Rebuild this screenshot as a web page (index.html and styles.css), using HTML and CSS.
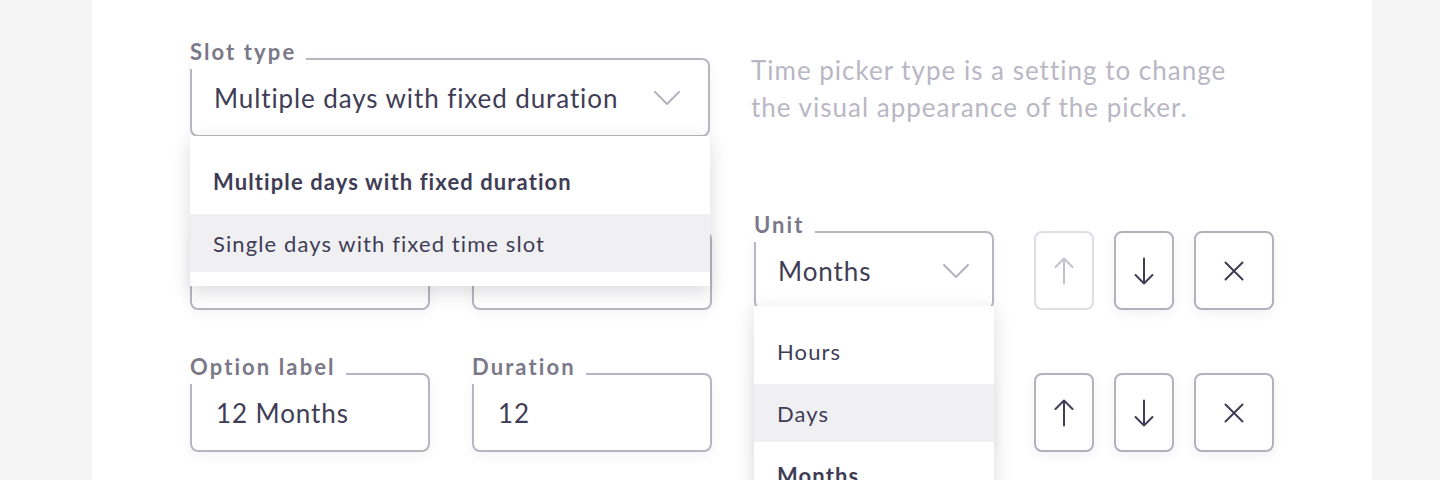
FILE: index.html
```html
<!DOCTYPE html>
<html lang="en">
<head>
    <meta charset="UTF-8">
    <meta name="viewport" content="width=device-width, initial-scale=1.0">
    <title>Time slots</title>
    <link rel="stylesheet" href="styles.css">
</head>
<body>
<div class="card">
    <div class="row-top">
        <div class="field wide">
            <span class="field-label">Slot type</span>
            <span class="field-value">Multiple days with fixed duration</span>
            <svg class="chevron" width="26" height="14" viewBox="0 0 26 14"><path d="M1 1l12 12L25 1"/></svg>
            <ul class="menu">
                <li class="selected">Multiple days with fixed duration</li>
                <li class="hover">Single days with fixed time slot</li>
            </ul>
        </div>
        <p class="help">Time picker type is a setting to change the visual appearance of the picker.</p>
    </div>

    <div class="row first">
        <div class="fields">
            <div class="field">
                <span class="field-label">Option label</span>
                <span class="field-value input">6 Months</span>
            </div>
            <div class="field">
                <span class="field-label">Duration</span>
                <span class="field-value input">6</span>
            </div>
            <div class="field">
                <span class="field-label">Unit</span>
                <span class="field-value">Months</span>
                <svg class="chevron" width="26" height="14" viewBox="0 0 26 14"><path d="M1 1l12 12L25 1"/></svg>
                <ul class="menu">
                    <li>Hours</li>
                    <li class="hover">Days</li>
                    <li class="selected">Months</li>
                </ul>
            </div>
        </div>
        <div class="actions">
            <button class="icon-btn" disabled>
                <svg width="20" height="28" viewBox="0 0 20 28"><path d="M10 1.5v25M1.5 10L10 1.5 18.5 10"/></svg>
            </button>
            <button class="icon-btn">
                <svg width="20" height="28" viewBox="0 0 20 28"><path d="M10 1.5v25M1.5 18L10 26.5 18.5 18"/></svg>
            </button>
            <button class="icon-btn remove">
                <svg width="20" height="20" viewBox="0 0 20 20"><path d="M1.5 1.5l17 17M18.5 1.5l-17 17"/></svg>
            </button>
        </div>
    </div>

    <div class="row">
        <div class="fields">
            <div class="field">
                <span class="field-label">Option label</span>
                <span class="field-value input">12 Months</span>
            </div>
            <div class="field">
                <span class="field-label">Duration</span>
                <span class="field-value input">12</span>
            </div>
            <div class="field">
                <span class="field-label">Unit</span>
                <span class="field-value">Months</span>
                <svg class="chevron" width="26" height="14" viewBox="0 0 26 14"><path d="M1 1l12 12L25 1"/></svg>
            </div>
        </div>
        <div class="actions">
            <button class="icon-btn">
                <svg width="20" height="28" viewBox="0 0 20 28"><path d="M10 1.5v25M1.5 10L10 1.5 18.5 10"/></svg>
            </button>
            <button class="icon-btn">
                <svg width="20" height="28" viewBox="0 0 20 28"><path d="M10 1.5v25M1.5 18L10 26.5 18.5 18"/></svg>
            </button>
            <button class="icon-btn remove">
                <svg width="20" height="20" viewBox="0 0 20 20"><path d="M1.5 1.5l17 17M18.5 1.5l-17 17"/></svg>
            </button>
        </div>
    </div>
</div>
</body>
</html>
```

FILE: styles.css
```css
body {
    margin: 0;
    height: 480px;
    overflow: hidden;
    background-color: #f5f5f6;
    font-family: Lato, 'Noto Sans', sans-serif;
    color: #3f3d56;
}

.card {
    width: 1280px;
    min-height: 480px;
    margin-left: 92px;
    padding: 58px 0 0 98px;
    box-sizing: border-box;
    background-color: #fff;
}

.row-top {
    display: flex;
    align-items: flex-start;
    gap: 41px;
}

.help {
    margin: -6px 0 0;
    width: 500px;
    font-size: 26px;
    line-height: 37px;
    letter-spacing: 1px;
    color: #b9b7c3;
}

.row {
    display: flex;
    gap: 40px;
    margin-top: 63px;
}

.row.first {
    margin-top: 94px;
}

.fields {
    display: flex;
    gap: 42px;
}

.actions {
    display: flex;
    gap: 20px;
}

/* outlined field with the label sitting on the top border */
.field {
    position: relative;
    display: flex;
    align-items: center;
    justify-content: space-between;
    width: 240px;
    height: 79px;
    padding: 0 23px 0 22px;
    box-sizing: border-box;
    border: 2px solid #b7b5c0;
    border-radius: 8px;
    background-color: #fff;
    box-shadow: 0 4px 12px rgba(40, 38, 60, 0.05);
}

.field.wide {
    width: 520px;
    padding-right: 28px;
}

.field-label {
    position: absolute;
    top: -19px;
    left: -2px;
    padding: 0 10px 0 0;
    height: 28px;
    line-height: 22px;
    background-color: #fff;
    font-size: 22px;
    font-weight: 700;
    letter-spacing: 2.1px;
    color: #7b7889;
}

.field-value {
    font-size: 26px;
    letter-spacing: 0.9px;
    white-space: nowrap;
}

.field-value.input {
    padding-left: 2px;
}

.chevron {
    fill: none;
    stroke: #b5b3bf;
    stroke-width: 2;
    stroke-linecap: round;
    stroke-linejoin: round;
}

.menu {
    position: absolute;
    z-index: 5;
    top: calc(100% - 2px);
    left: -2px;
    right: -2px;
    margin: 0;
    padding: 16px 0 14px;
    list-style-type: none;
    background-color: #fff;
    box-shadow: 0 6px 18px rgba(30, 28, 50, 0.16);
}

.field.wide .menu {
    top: calc(100% + 1px);
}

.menu li {
    display: flex;
    align-items: center;
    height: 58px;
    padding-left: 23px;
    margin-bottom: 4px;
    font-size: 22px;
    letter-spacing: 1.1px;
    white-space: nowrap;
}

.menu li:last-child {
    margin-bottom: 0;
}

.menu li.selected {
    font-weight: 700;
}

.menu li.hover {
    background-color: #f0f0f3;
}

.icon-btn {
    display: flex;
    align-items: center;
    justify-content: center;
    width: 60px;
    height: 79px;
    padding: 0;
    border: 2px solid #b3b1bc;
    border-radius: 8px;
    background-color: #fff;
    box-shadow: 0 4px 12px rgba(40, 38, 60, 0.06);
    cursor: pointer;
}

.icon-btn.remove {
    width: 80px;
}

.icon-btn svg {
    fill: none;
    stroke: #3f3d56;
    stroke-width: 2;
    stroke-linecap: round;
    stroke-linejoin: round;
}

.icon-btn:disabled {
    border-color: #dedde3;
    box-shadow: none;
    cursor: default;
}

.icon-btn:disabled svg {
    stroke: #c2c0ca;
}
```
